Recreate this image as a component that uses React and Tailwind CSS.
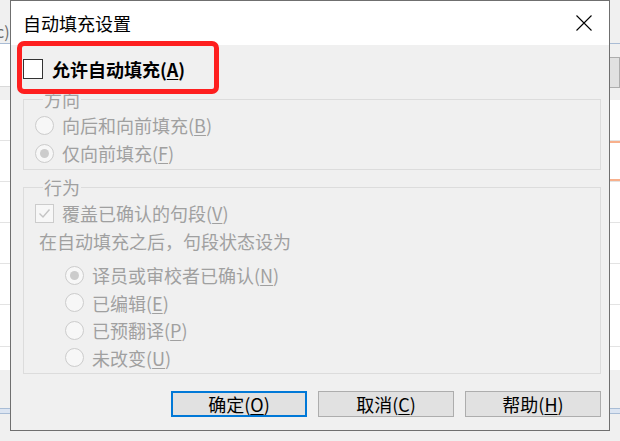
import React from "react";

const FONT = { fontFamily: '"Noto Sans CJK SC", "Noto Sans", sans-serif' };

function Radio({ checked }) {
  return (
    <span className="flex h-[19px] w-[19px] shrink-0 items-center justify-center rounded-full border border-[#cccccc] bg-[#f7f7f7]">
      {checked && <span className="h-[9px] w-[9px] rounded-full bg-[#cccccc]" />}
    </span>
  );
}

function RadioRow({ checked, label, k }) {
  return (
    <div className="flex h-[20px] items-center gap-[8px]">
      <Radio checked={checked} />
      <span className="text-[18px] leading-none text-[#a0a0a0]">
        {label}(<span className="underline underline-offset-2">{k}</span>)
      </span>
    </div>
  );
}

function Button({ label, k, primary }) {
  return (
    <button
      className={
        "flex h-[26px] w-[136px] items-center justify-center bg-[#e1e1e1] text-[18px] leading-none text-black " +
        (primary ? "border-2 border-[#0078d7]" : "border border-[#adadad]")
      }
    >
      {label}(<span className="underline underline-offset-2">{k}</span>)
    </button>
  );
}

export default function App() {
  return (
    <div className="relative h-[441px] w-[620px] overflow-hidden bg-[#f0f0f0]" style={FONT}>
      {/* background application */}
      <div className="flex h-full flex-col">
        <div className="flex h-[43px] items-end pb-[4px] text-[16px] leading-none text-[#6d6d6d]">
          <span className="-ml-[4px]">c)</span>
        </div>
        <div className="h-px bg-[#a9bcd5]" />
        <div className="flex h-[56px]">
          <div className="flex w-[310px] flex-col">
            <div className="h-[43px] border-b border-[#d9d9d9] bg-white" />
            <div className="flex-1 bg-[#f0f0f0]" />
          </div>
          <div className="flex flex-1 justify-end pt-[13px]">
            <div className="flex h-[31px] w-[80px] items-center justify-center border border-[#adadad] bg-[#e1e1e1] text-[17px] text-black">
              选择
            </div>
          </div>
        </div>
        <div className="flex h-[270px] flex-col bg-white">
          <div className="h-[41px] border-b border-[#e3e3e3]" />
          <div className="flex h-[41px] justify-end border-b border-[#e3e3e3]">
            <div className="h-full w-[200px] border-y-2 border-[#f8b08c]" />
          </div>
          <div className="h-[41px] border-b border-[#e3e3e3]" />
          <div className="h-[41px] border-b border-[#e3e3e3]" />
          <div className="h-[41px] border-b border-[#e3e3e3]" />
          <div className="h-[42px] border-b border-[#e3e3e3]" />
          <div className="flex-1" />
        </div>
        <div className="mt-[38px] h-[6px] border-y border-[#a9bdd6] bg-[#dce5f2]" />
      </div>

      {/* dialog window */}
      <div className="absolute left-[10px] top-0 flex h-[431px] w-[600px] flex-col border border-[#6f6f6f] bg-[#f0f0f0]">
        <div className="flex h-[44px] shrink-0 items-center justify-between bg-white pl-[12px] pr-[16px]">
          <span className="text-[18px] leading-none text-black">自动填充设置</span>
          <svg width="16" height="16" viewBox="0 0 16 16" className="mr-[1px]">
            <path d="M0.5 0.5 L15.5 15.5 M15.5 0.5 L0.5 15.5" stroke="#000" strokeWidth="1.1" fill="none" />
          </svg>
        </div>

        <div className="flex flex-1 flex-col pl-[12px] pr-[8px] pt-[14px]">
          <div className="flex h-[20px] items-center gap-[9px]">
            <span className="h-[20px] w-[20px] border border-[#333333] bg-white" />
            <span className="text-[18px] font-bold leading-none text-black">
              允许自动填充(<span className="underline underline-offset-2">A</span>)
            </span>
          </div>

          <fieldset className="mt-[11px] border border-[#dcdcdc] pb-[6px] pl-[11px] pt-[7px]">
            <legend className="ml-[8px] px-[1px] text-[18px] leading-[18px] text-[#a0a0a0]">方向</legend>
            <div className="flex flex-col gap-[8px]">
              <RadioRow label="向后和向前填充" k="B" />
              <RadioRow checked label="仅向前填充" k="F" />
            </div>
          </fieldset>

          <fieldset className="mt-[8px] border border-[#dcdcdc] pb-[5px] pl-[11px] pt-[7px]">
            <legend className="ml-[8px] px-[1px] text-[18px] leading-[18px] text-[#a0a0a0]">行为</legend>
            <div className="flex h-[20px] items-center gap-[8px]">
              <span className="flex h-[19px] w-[19px] items-center justify-center border border-[#cccccc] bg-[#f7f7f7]">
                <svg width="13" height="13" viewBox="0 0 13 13">
                  <path d="M1.5 6.5 L5 10 L11.5 2.5" stroke="#c4c4c4" strokeWidth="1.4" fill="none" />
                </svg>
              </span>
              <span className="text-[18px] leading-none text-[#a0a0a0]">
                覆盖已确认的句段(<span className="underline underline-offset-2">V</span>)
              </span>
            </div>
            <div className="mt-[8px] flex h-[20px] items-center pl-[4px] text-[18px] leading-none text-[#a0a0a0]">
              在自动填充之后，句段状态设为
            </div>
            <div className="mt-[14px] flex flex-col gap-[7.5px] pl-[30px]">
              <RadioRow checked label="译员或审校者已确认" k="N" />
              <RadioRow label="已编辑" k="E" />
              <RadioRow label="已预翻译" k="P" />
              <RadioRow label="未改变" k="U" />
            </div>
          </fieldset>

          <div className="mt-[17px] flex justify-end gap-[11px]">
            <Button primary label="确定" k="O" />
            <Button label="取消" k="C" />
            <Button label="帮助" k="H" />
          </div>
        </div>
      </div>

      {/* red highlight annotation */}
      <div className="absolute left-[17px] top-[41px] h-[53px] w-[202px] rounded-[7px] border-[5px] border-[#fe1f1f]" />
    </div>
  );
}
